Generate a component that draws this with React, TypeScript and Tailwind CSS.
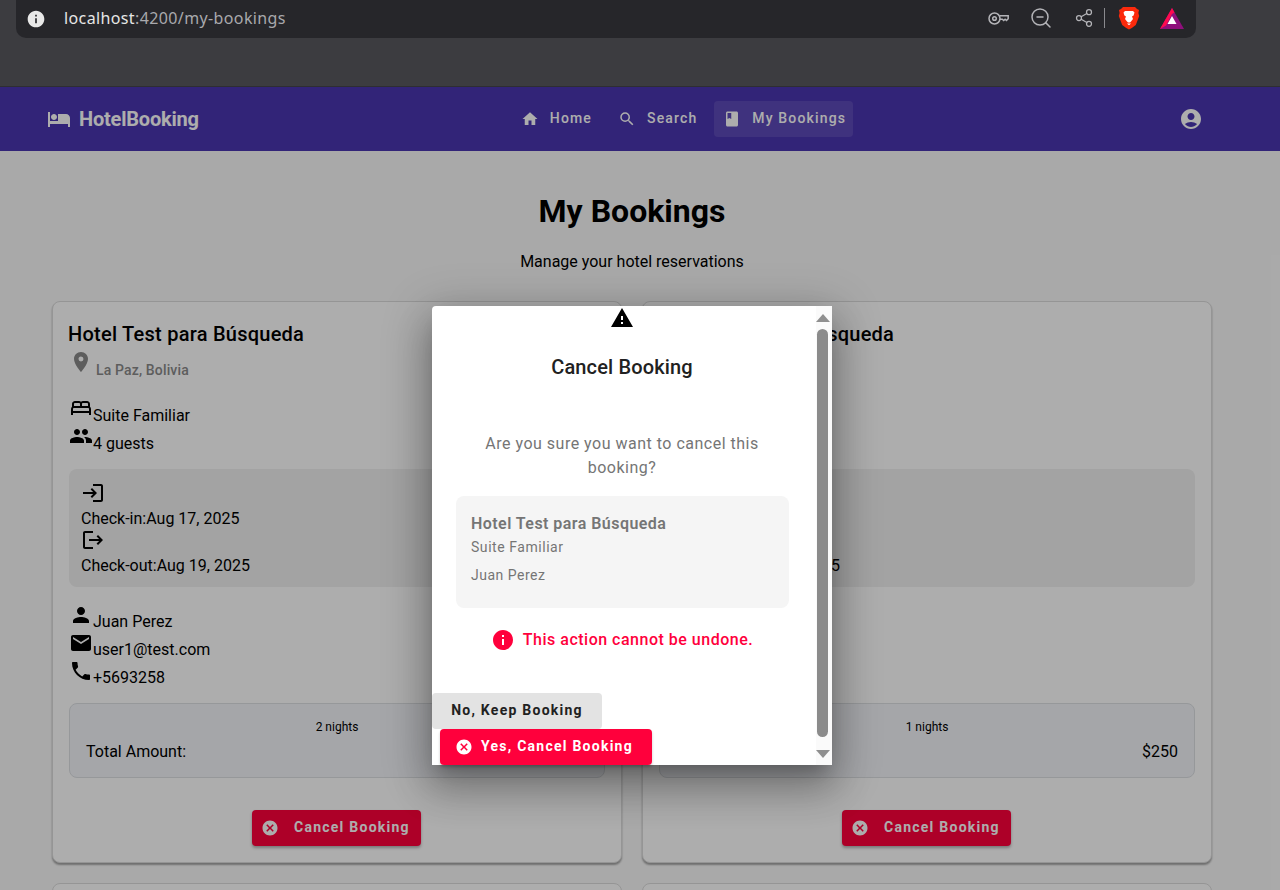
import React from 'react';
import {
  MdAccountCircle,
  MdBook,
  MdCancel,
  MdEmail,
  MdHome,
  MdHotel,
  MdInfo,
  MdLocationOn,
  MdLogin,
  MdLogout,
  MdOutlineBed,
  MdPeople,
  MdPerson,
  MdPhone,
  MdSearch,
  MdWarning,
} from 'react-icons/md';
import { Share2, ZoomOut } from 'lucide-react';

const bookings = [
  { checkOut: 'Aug 19, 2025', nights: '2 nights', total: '$500' },
  { checkOut: 'Aug 18, 2025', nights: '1 nights', total: '$250' },
];

const BrowserBar = () => (
  <div className="h-[87px] bg-[#3c3c40] border-b border-[#2e2e32]">
    <div className="ml-4 w-[1180px] h-[38px] bg-[#26262a] rounded-b-[10px] flex items-center">
      <MdInfo className="ml-[10px] w-[20px] h-[20px] text-[#e8e8e8] mb-[1px]" />
      <span className="ml-[18px] mb-[2px] text-[16px] tracking-[0.38px] font-['Noto_Sans',sans-serif] text-[#e6e6e6]">
        localhost<span className="text-[#a9a9ad]">:4200/my-bookings</span>
      </span>
      <div className="ml-auto mb-[2px] flex items-center text-[#b4b4b8]">
        <svg width="21" height="15" viewBox="0 0 21 15" fill="none" stroke="currentColor" strokeWidth="1.5">
          <circle cx="6.500" cy="7.500" r="5.500" />
          <circle cx="6.500" cy="7.500" r="1.800" />
          <path d="M11.800 4.800h8.400v3l-1.700 1.700-1.400-1.300-1.400 1.300-1.400-1.300h-2.500" />
        </svg>
        <ZoomOut className="ml-[20px] w-6 h-6" strokeWidth={1.5} />
        <Share2 className="ml-[21px] w-[20px] h-[20px]" strokeWidth={1.5} />
        <div className="ml-[10px] w-px h-[20px] bg-[#8a8a8e]" />
        <svg className="ml-[13px]" width="22" height="24" viewBox="0 0 22 24">
          <path d="M5 1h12l2 2 2 1-.6 3 .8 3-3.400 9-4 3-2.800 1.500L8.200 22l-4-3-3.400-9 .8-3L1 4l2-1z" fill="#fb2a0c" />
          <path d="M7 5h8l1.500 1.500-.9 3-1.600 1 1 2.500-2 2.500-1 1h-2l-1-1-2-2.500 1-2.500-1.600-1-.9-3z" fill="#ffffff" />
          <path d="M9 17.500h4l-2 1.800z" fill="#ffffff" />
        </svg>
        <svg className="ml-[20px] mr-[12px]" width="24" height="21" viewBox="0 0 24 21">
          <path d="M12 0L0 21h24z" fill="#8f0f7c" />
          <path d="M12 0L0 21l6-3.500L12 6z" fill="#ff0a4f" />
          <path d="M12 0l2.500 4.400L12 6z" fill="#ff0a4f" />
          <path d="M12 8l-4.500 8h9z" fill="#ffffff" />
        </svg>
      </div>
    </div>
  </div>
);

const NavButton = ({ icon, label, active }: { icon: React.ReactNode; label: string; active?: boolean }) => (
  <div className={`h-9 flex items-center pl-[9px] pr-[7px] gap-[11px] rounded ${active ? 'bg-white/10' : ''}`}>
    {icon}
    <span className="pb-px text-[14px] font-medium tracking-[1.15px]">{label}</span>
  </div>
);

const NavBar = () => (
  <div className="h-16 bg-[#4b36b2] text-white flex items-center pl-[47px] pr-[77px]">
    <MdHotel className="w-6 h-6" />
    <span className="ml-2 text-[20px] font-bold tracking-[-0.2px]">HotelBooking</span>
    <div className="ml-[313px] flex items-center gap-[10px]">
      <NavButton icon={<MdHome className="w-[18px] h-[18px]" />} label="Home" />
      <NavButton icon={<MdSearch className="w-[18px] h-[18px]" />} label="Search" />
      <NavButton icon={<MdBook className="w-[18px] h-[18px]" />} label="My Bookings" active />
    </div>
    <MdAccountCircle className="ml-auto w-6 h-6" />
  </div>
);

const InfoRow = ({ icon, text, tight }: { icon: React.ReactNode; text: string; tight?: boolean }) => (
  <div className="h-7 flex items-start">
    <span className="w-6 h-6 shrink-0">{icon}</span>
    <span className={`${tight ? 'mt-[7px]' : 'mt-[8px]'} text-[16px] leading-[24px]`}>{text}</span>
  </div>
);

const BookingCard = ({ checkOut, nights, total }: { checkOut: string; nights: string; total: string }) => (
  <div className="h-[562px] bg-white rounded-lg border border-[#dcdcdc] shadow-[0_2px_2px_rgba(0,0,0,0.35)] pt-[16px] px-4 text-black">
    <h3 className="-ml-px text-[20px] leading-[32px] font-medium tracking-[0.25px]">Hotel Test para Búsqueda</h3>
    <div className="flex items-start h-[30px] text-[#8a8a8a]">
      <MdLocationOn className="w-6 h-6 shrink-0" />
      <span className="ml-[3px] mt-[12px] text-[14px] leading-[16px] font-medium tracking-[0.15px]">La Paz, Bolivia</span>
    </div>
    <div className="mt-[16px]">
      <InfoRow icon={<MdOutlineBed className="w-6 h-6" />} text="Suite Familiar" />
      <InfoRow icon={<MdPeople className="w-6 h-6" />} text="4 guests" />
    </div>
    <div className="mt-[17px] h-[118px] rounded-lg bg-[#f0f0f0] pt-[12px] px-3">
      <MdLogin className="w-6 h-6" />
      <div className="pt-[4px] text-[16px] leading-[19px]">Check-in:Aug 17, 2025</div>
      <MdLogout className="w-6 h-6" />
      <div className="pt-[4px] text-[16px] leading-[19px]">Check-out:{checkOut}</div>
    </div>
    <div className="mt-[16px]">
      <InfoRow icon={<MdPerson className="w-6 h-6" />} text="Juan Perez" tight />
      <InfoRow icon={<MdEmail className="w-6 h-6" />} text="user1@test.com" tight />
      <InfoRow icon={<MdPhone className="w-6 h-6" />} text="+5693258" tight />
    </div>
    <div className="mt-[16px] h-[75px] rounded-lg border border-[#dde0e4] bg-[#f3f5fa] px-4 pt-[15px]">
      <div className="text-[12px] leading-[16px] text-center">{nights}</div>
      <div className="mt-[5px] flex justify-between text-[16px] leading-[24px]">
        <span>Total Amount:</span>
        <span>{total}</span>
      </div>
    </div>
    <div className="mt-[32px] flex justify-center">
      <button className="mr-px h-9 w-[169px] flex items-center pl-[9px] rounded bg-[#ff003c] text-white shadow-[0_2px_3px_rgba(0,0,0,0.3)]">
        <MdCancel className="w-[18px] h-[18px]" />
        <span className="ml-[15px] pb-px text-[14px] font-bold tracking-[1.25px]">Cancel Booking</span>
      </button>
    </div>
  </div>
);

const ScrollTrack = () => (
  <div className="w-4 pr-[3px] bg-[#fafafa] flex flex-col items-center">
    <div className="mt-[8px] w-0 h-0 border-x-[7px] border-x-transparent border-b-[8px] border-b-[#8f8f8f]" />
    <div className="mt-[7px] w-[11px] h-[408px] rounded-[6px] bg-[#8b8b8b]" />
    <div className="mt-[13px] w-0 h-0 border-x-[7px] border-x-transparent border-t-[8px] border-t-[#8f8f8f]" />
  </div>
);

const CancelDialog = () => (
  <div className="absolute left-[432px] top-[219px] w-[400px] h-[459px] flex bg-white rounded-tl shadow-[0_11px_15px_-7px_rgba(0,0,0,0.2),0_24px_38px_3px_rgba(0,0,0,0.2),0_9px_46px_8px_rgba(0,0,0,0.2)]">
    <div className="w-[384px] flex flex-col">
      <div className="w-[380px]">
        <MdWarning className="mx-auto w-6 h-6 text-black" />
        <h2 className="mt-[21px] text-center text-[20px] leading-[32px] font-medium tracking-[0.15px] text-[#212121]">
          Cancel Booking
        </h2>
        <p className="mt-[49px] px-6 text-center text-[16px] leading-[24px] tracking-[0.5px] text-[#757575]">
          Are you sure you want to cancel this booking?
        </p>
      </div>
      <div className="mt-[16px] ml-6 w-[333px] h-[112px] shrink-0 rounded-lg bg-[#f5f5f5] px-[15px] pt-[17px] text-[#757575]">
        <div className="text-[16px] leading-[22px] font-semibold tracking-[0.45px]">Hotel Test para Búsqueda</div>
        <div className="text-[14px] leading-[24px] tracking-[0.55px]">Suite Familiar</div>
        <div className="mt-[4px] text-[14px] leading-[24px] tracking-[0.5px]">Juan Perez</div>
      </div>
      <div className="mt-[20px] w-[380px] flex items-center justify-center text-[#ff003c]">
        <MdInfo className="w-6 h-6" />
        <span className="ml-[8px] text-[16px] leading-[24px] font-medium tracking-[0.5px]">This action cannot be undone.</span>
      </div>
      <div className="mt-[41px] flex flex-col items-start">
        <button className="h-9 w-[170px] pb-px rounded bg-[#e3e3e3] text-[14px] font-bold tracking-[1.25px] text-[#212121]">
          No, Keep Booking
        </button>
        <button className="ml-2 h-9 w-[212px] flex items-center pl-[15px] rounded bg-[#ff003c] text-white shadow-[0_2px_3px_rgba(0,0,0,0.2)]">
          <MdCancel className="w-[18px] h-[18px]" />
          <span className="ml-2 pb-px text-[14px] font-bold tracking-[1.25px]">Yes, Cancel Booking</span>
        </button>
      </div>
    </div>
    <ScrollTrack />
  </div>
);

export default function App() {
  return (
    <div className="h-[890px] overflow-hidden bg-[#fafafa] font-[Roboto,sans-serif]">
      <BrowserBar />
      <div className="relative h-[803px] overflow-hidden">
        <NavBar />
        <main className="w-[1264px] px-[52px]">
          <h1 className="mt-[40px] text-center text-[32px] leading-[40px] font-bold text-black">My Bookings</h1>
          <p className="mt-[19px] text-center text-[16px] leading-[24px] text-black">Manage your hotel reservations</p>
          <div className="mt-[27px] grid grid-cols-2 gap-5">
            {bookings.map((b) => (
              <BookingCard key={b.nights} {...b} />
            ))}
            <div className="h-[200px] bg-white rounded-lg border border-[#dcdcdc]" />
            <div className="h-[200px] bg-white rounded-lg border border-[#dcdcdc]" />
          </div>
        </main>
        <div className="absolute inset-0 bg-black/[0.32]">
          <CancelDialog />
        </div>
      </div>
    </div>
  );
}
